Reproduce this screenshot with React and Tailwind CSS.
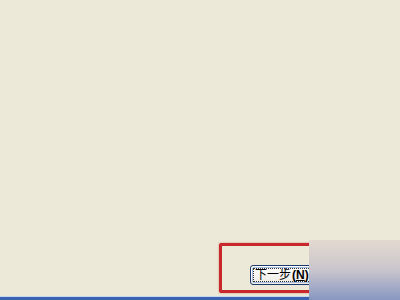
export default function App() {
  return (
    <div className="relative w-[400px] h-[300px] overflow-hidden bg-[#ece9d8] flex flex-col" style={{ fontFamily: '"Liberation Sans", "Noto Sans CJK SC", sans-serif' }}>
      <div className="flex-1" />
      {/* highlight frame around the button */}
      <div className="ml-[219px] w-[110px] h-[50px] border-[3px] border-[#c8282c] rounded-[2px] shadow-[0_0_2px_rgba(200,40,44,0.6)] pt-[19px] pl-[28px]">
        <button className="h-[20px] w-[74px] rounded-[3px] border border-[#1e3b70] bg-gradient-to-b from-[#ffffff] to-[#ecebe4] p-[1px] flex">
          <span className="flex-1 flex items-center border border-[#a9bde0] rounded-[2px]">
            <span className="flex-1 h-full flex items-center border border-dotted border-[#333] pl-[1px] text-[12px] leading-none text-black">
              <span>下一步</span>
              <span className="ml-[1px] font-bold">(<span className="underline">N</span>)</span>
            </span>
          </span>
        </button>
      </div>
      <div className="h-[3px]" />
      <div className="h-[1px] bg-[#c6d8f0]" />
      <div className="h-[3px] bg-[#3a62b0]" />
      {/* faded overlay panel on the right */}
      <div className="absolute left-[309px] top-[240px] w-[91px] h-[60px] bg-gradient-to-b from-[#e4d9cf] via-[#c9c5cc] to-[#8797c1]" />
    </div>
  );
}
